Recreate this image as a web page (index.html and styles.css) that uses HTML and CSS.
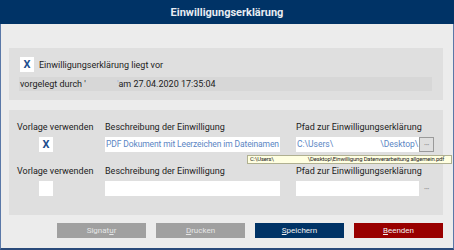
FILE: index.html
```html
<!DOCTYPE html>
<html lang="de">
<head>
    <meta charset="UTF-8">
    <title>Einwilligungserklärung</title>
    <link rel="stylesheet" href="styles.css">
</head>
<body>
    <div class="window">
        <div class="titlebar">Einwilligungserklärung</div>
        <div class="content">
            <div class="panel status">
                <div class="check-row">
                    <span class="check">X</span>
                    <span>Einwilligungserklärung liegt vor</span>
                </div>
                <div class="band">vorgelegt durch '<span class="redact"></span><span class="quote">'</span> am 27.04.2020 17:35:04</div>
            </div>

            <div class="panel docs">
                <div class="doc-row">
                    <div class="lbl">Vorlage verwenden</div>
                    <div class="lbl">Beschreibung der Einwilligung</div>
                    <div class="lbl">Pfad zur Einwilligungserklärung</div>
                    <div class="cell-check"><span class="check">X</span></div>
                    <div class="field">PDF Dokument mit Leerzeichen im Dateinamen</div>
                    <div class="path-wrap">
                        <div class="field path">C:\Users\<span class="redact-wide"></span>\Desktop\</div>
                        <span class="dots active">•••</span>
                        <div class="tooltip">C:\Users\<span class="redact-tip"></span>\Desktop\Einwilligung Datenverarbeitung allgemein.pdf</div>
                    </div>
                </div>
                <div class="doc-row">
                    <div class="lbl">Vorlage verwenden</div>
                    <div class="lbl">Beschreibung der Einwilligung</div>
                    <div class="lbl">Pfad zur Einwilligungserklärung</div>
                    <div class="cell-check"><span class="check"></span></div>
                    <div class="field"></div>
                    <div class="path-wrap">
                        <div class="field path"></div>
                        <span class="dots">•••</span>
                    </div>
                </div>
            </div>

            <div class="buttons">
                <button class="btn grey">Signat<u>u</u>r</button>
                <button class="btn grey"><u>D</u>rucken</button>
                <button class="btn blue"><u>S</u>peichern</button>
                <button class="btn red"><u>B</u>eenden</button>
            </div>
        </div>
    </div>
</body>
</html>
```

FILE: styles.css
```css
body {
    margin: 0;
    font-family: Roboto, "Liberation Sans", sans-serif;
    font-size: 9px;
    color: #222;
}
.window {
    width: 454px;
    height: 250px;
    box-sizing: border-box;
    border-left: 1px solid #5a78a8;
    border-right: 1px solid #5a78a8;
    border-bottom: 2px solid #2a4a7a;
    background: #ececec;
    display: flex;
    flex-direction: column;
}
.titlebar {
    height: 24px;
    background: #003366;
    color: #e8ecf2;
    font-weight: bold;
    font-size: 11px;
    display: flex;
    align-items: center;
    justify-content: center;
    margin: 0 -1px;
}
.content {
    padding: 24px 10px 0 8px;
}
.panel {
    background: #dfdfdf;
}
.status {
    height: 52px;
    box-sizing: border-box;
    padding: 9px 11px 0 10px;
}
.check-row {
    display: flex;
    align-items: center;
    height: 15px;
    gap: 5px;
    padding-left: 1px;
}
.check {
    width: 14px;
    height: 15px;
    background: #fff;
    color: #1f4f8f;
    font-weight: bold;
    font-size: 11px;
    display: flex;
    align-items: center;
    justify-content: center;
}
.band {
    margin-top: 5px;
    height: 14px;
    background: #d7d7d7;
    display: flex;
    align-items: center;
    padding-left: 1px;
}
.redact {
    display: inline-block;
    width: 31px;
}
.quote {
    color: #8fb0e0;
}
.docs {
    margin-top: 10px;
    height: 105px;
    box-sizing: border-box;
    padding: 11px 8px 0 8px;
}
.doc-row {
    display: grid;
    grid-template-columns: 88px 191px 138px;
    grid-template-rows: 13px 15px;
    row-gap: 3px;
    margin-bottom: 13px;
}
.lbl {
    white-space: nowrap;
    line-height: 13px;
}
.cell-check {
    display: flex;
    padding-left: 22px;
}
.field {
    background: #fff;
    height: 15px;
    width: 175px;
    color: #5b86c4;
    font-size: 8.5px;
    letter-spacing: -0.12px;
    line-height: 15px;
    padding-left: 1px;
    box-sizing: border-box;
    white-space: nowrap;
    overflow: hidden;
}
.path-wrap {
    position: relative;
    display: flex;
}
.field.path {
    width: 123px;
    letter-spacing: 0;
}
.redact-wide {
    display: inline-block;
    width: 47px;
}
.dots {
    width: 15px;
    height: 15px;
    box-sizing: border-box;
    color: #9a9a9a;
    font-size: 6px;
    letter-spacing: -0.3px;
    display: flex;
    align-items: center;
    justify-content: center;
}
.dots.active {
    border: 1px solid #9a9a9a;
}
.tooltip {
    position: absolute;
    top: 18px;
    left: -49px;
    width: 205px;
    height: 9px;
    box-sizing: border-box;
    background: #ffffe1;
    border: 1px solid #b0b090;
    font-size: 5.9px;
    line-height: 7px;
    padding-left: 2px;
    white-space: nowrap;
    overflow: hidden;
    color: #222;
    letter-spacing: -0.15px;
}
.redact-tip {
    display: inline-block;
    width: 34px;
}
.buttons {
    display: flex;
    justify-content: flex-end;
    gap: 10px;
    margin-top: 8px;
    padding-right: 0;
}
.btn {
    width: 89px;
    height: 15px;
    border: none;
    font-family: Roboto, "Liberation Sans", sans-serif;
    font-size: 8px;
    padding: 0;
    color: #f0f0f0;
}
.btn.grey {
    background: #a0a0a0;
    color: #e6e6e6;
}
.btn.blue {
    background: #003366;
}
.btn.red {
    background: #990000;
}
```
